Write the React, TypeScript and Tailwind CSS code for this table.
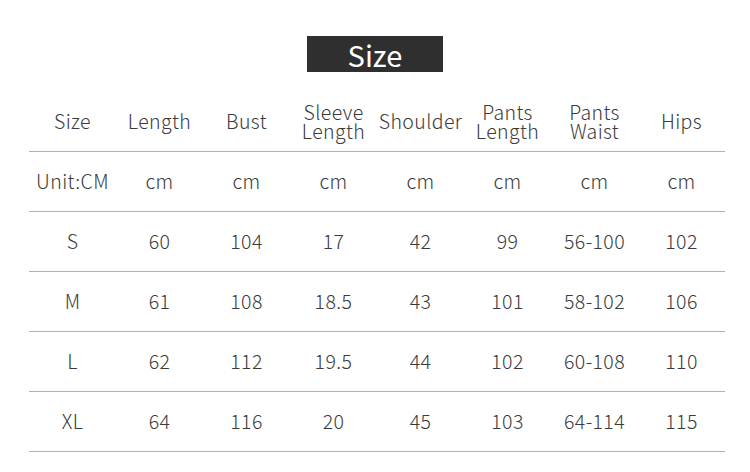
import React from "react";

const headers: string[][] = [
  ["Size"],
  ["Length"],
  ["Bust"],
  ["Sleeve", "Length"],
  ["Shoulder"],
  ["Pants", "Length"],
  ["Pants", "Waist"],
  ["Hips"],
];

const rows: string[][] = [
  ["Unit:CM", "cm", "cm", "cm", "cm", "cm", "cm", "cm"],
  ["S", "60", "104", "17", "42", "99", "56-100", "102"],
  ["M", "61", "108", "18.5", "43", "101", "58-102", "106"],
  ["L", "62", "112", "19.5", "44", "102", "60-108", "110"],
  ["XL", "64", "116", "20", "45", "103", "64-114", "115"],
];

export default function App() {
  return (
    <div
      className="w-[750px] h-[472px] bg-white flex flex-col items-center"
      style={{ fontFamily: '"Noto Sans CJK SC", "Noto Sans", sans-serif' }}
    >
      <div className="mt-[36px] w-[136px] h-[36px] bg-[#2f2f2f] flex items-center justify-center text-white text-[29px] leading-none">
        Size
      </div>
      <div className="mt-[21px] self-start ml-[29px] w-[696px] flex flex-col text-[#3a3a3a] text-[19.5px] tracking-[0.4px] font-light">
        <div className="h-[59px] grid grid-cols-8 items-center border-b border-[#b0b0b0]">
          {headers.map((h, i) => (
            <div key={i} className="flex flex-col items-center leading-[19px] whitespace-nowrap -mt-[3px]">
              {h.map((t, j) => (
                <span key={j}>{t}</span>
              ))}
            </div>
          ))}
        </div>
        {rows.map((r, i) => (
          <div key={i} className="h-[60px] grid grid-cols-8 items-center border-b border-[#b0b0b0]">
            {r.map((c, j) => (
              <div key={j} className="text-center leading-none whitespace-nowrap -mt-[1px]">
                {c}
              </div>
            ))}
          </div>
        ))}
      </div>
    </div>
  );
}
